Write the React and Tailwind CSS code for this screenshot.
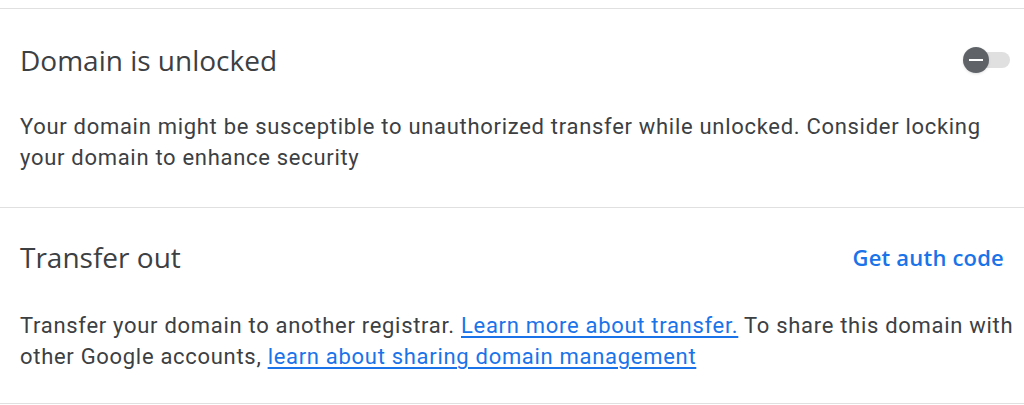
export default function App() {
  const heading = { fontFamily: "'Open Sans', sans-serif" };
  return (
    <div className="w-[1024px] h-[405px] bg-white overflow-hidden" style={{ fontFamily: "Roboto, sans-serif" }}>
      <div className="h-[8px]" />
      <div className="border-t border-[#e0e0e0] pl-[20px] pr-[10px]">
        <div className="flex items-center justify-between pt-[33px] pr-[4px]">
          <h2 className="text-[28px] leading-[36px] text-[#3c4043]" style={heading}>Domain is unlocked</h2>
          <div className="relative w-[47px] h-[26px] flex items-center">
            <div className="absolute right-0 left-[10px] h-[16px] rounded-full bg-[#e0e0e0]" />
            <div className="relative w-[26px] h-[26px] rounded-full bg-[#5f6368] shadow flex items-center justify-center">
              <div className="w-[14px] h-[2px] bg-white" />
            </div>
          </div>
        </div>
        <p className="mt-[33px] text-[22px] leading-[31px] tracking-[0.7px] text-[#3c4043]">
          Your domain might be susceptible to unauthorized transfer while unlocked. Consider locking your domain to enhance security
        </p>
      </div>
      <div className="h-[34px]" />
      <div className="border-t border-b border-[#e0e0e0] pl-[20px] pr-[6px] h-[197px]">
        <div className="flex items-center justify-between pt-[31px] pr-[14px]">
          <h2 className="text-[28px] leading-[36px] text-[#3c4043]" style={heading}>Transfer out</h2>
          <a className="text-[22px] font-semibold tracking-[0.2px] text-[#1a73e8]" style={heading}>Get auth code</a>
        </div>
        <p className="mt-[35px] text-[22px] leading-[31px] tracking-[0.7px] text-[#3c4043]">
          Transfer your domain to another registrar.{" "}
          <a className="text-[#1a73e8] underline underline-offset-[3px]">Learn more about transfer.</a> To share this domain with other Google accounts,{" "}
          <a className="text-[#1a73e8] underline underline-offset-[3px]">learn about sharing domain management</a>
        </p>
      </div>
    </div>
  );
}
